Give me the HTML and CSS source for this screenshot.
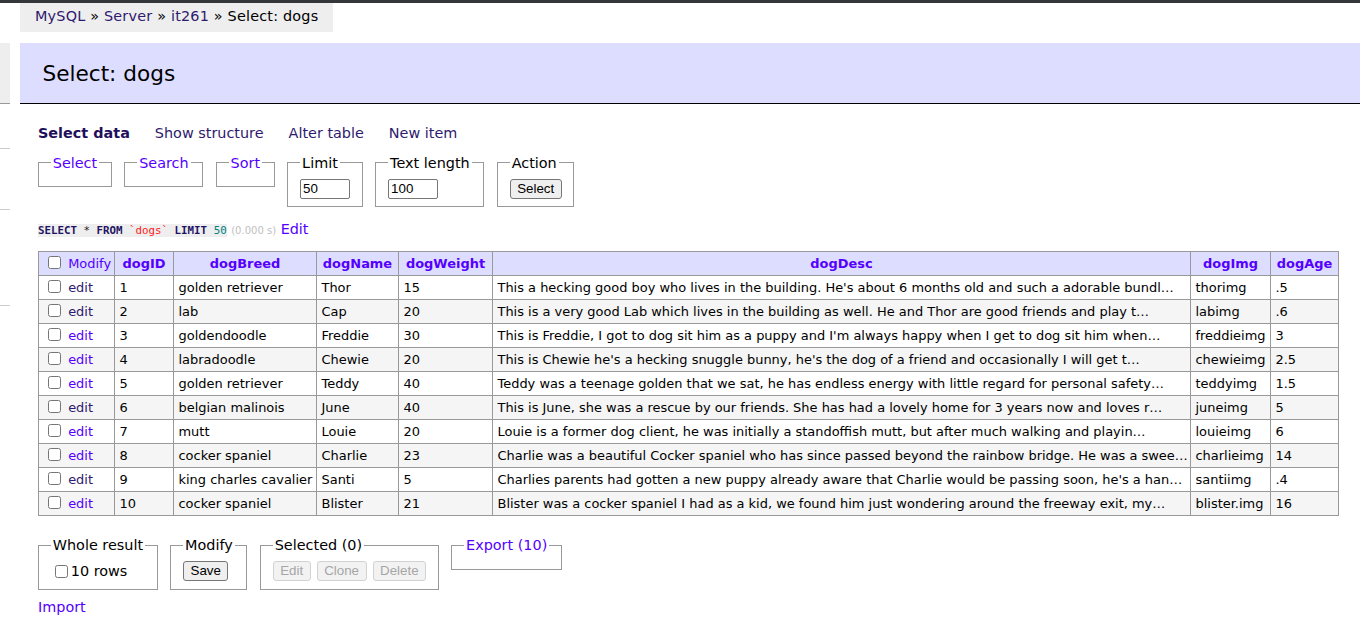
FILE: index.html
```html
<!DOCTYPE html>
<html lang="en">
<head>
<meta charset="utf-8">
<title>Select: dogs - Server - Adminer</title>
<link rel="stylesheet" href="styles.css">
</head>
<body>
<div class="chrome-bar"></div>
<div class="page">
  <aside class="menu">
    <div class="menu-head"></div>
    <div class="menu-block b1"></div>
    <div class="menu-block b2"></div>
    <div class="menu-block b3"></div>
  </aside>
  <main class="main">
    <div class="breadcrumb"><a class="visited" href="#">MySQL</a> » <a class="visited" href="#">Server</a> » <a class="visited" href="#">it261</a> » Select: dogs</div>
    <h2 class="title">Select: dogs</h2>
    <div class="content">
      <p class="links"><a class="visited active" href="#">Select data</a><a class="visited" href="#">Show structure</a><a class="visited" href="#">Alter table</a><a class="visited" href="#">New item</a></p>
      <form class="select-form">
        <fieldset class="fs"><legend><a href="#">Select</a></legend></fieldset>
        <fieldset class="fs"><legend><a href="#">Search</a></legend></fieldset>
        <fieldset class="fs"><legend><a href="#">Sort</a></legend></fieldset>
        <fieldset class="fs"><legend>Limit</legend><input class="num-input" type="text" value="50"></fieldset>
        <fieldset class="fs"><legend>Text length</legend><input class="num-input" type="text" value="100"></fieldset>
        <fieldset class="fs"><legend>Action</legend><button class="btn" type="button">Select</button></fieldset>
      </form>
      <p class="sql"><code class="jush"><span class="kw">SELECT</span> * <span class="kw">FROM</span> <span class="bac">`dogs`</span> <span class="kw">LIMIT</span> <span class="num">50</span></code> <span class="time">(0.000 s)</span> <a href="#">Edit</a></p>

      <table class="data">
        <colgroup>
          <col class="w-mod"><col class="w-id"><col class="w-breed"><col class="w-name"><col class="w-weight"><col class="w-desc"><col class="w-img"><col class="w-age">
        </colgroup>
        <thead>
          <tr>
            <td class="head-mod"><input type="checkbox" class="chk"> <a href="#">Modify</a></td>
            <th><a href="#">dogID</a></th>
            <th><a href="#">dogBreed</a></th>
            <th><a href="#">dogName</a></th>
            <th><a href="#">dogWeight</a></th>
            <th><a href="#">dogDesc</a></th>
            <th><a href="#">dogImg</a></th>
            <th><a href="#">dogAge</a></th>
          </tr>
        </thead>
        <tbody>
          <tr><td><input type="checkbox" class="chk"> <a class="visited" href="#">edit</a></td><td>1</td><td>golden retriever</td><td>Thor</td><td>15</td><td class="desc">This a hecking good boy who lives in the building. He's about 6 months old and such a adorable bundl…</td><td>thorimg</td><td>.5</td></tr>
          <tr class="odd"><td><input type="checkbox" class="chk"> <a class="visited" href="#">edit</a></td><td>2</td><td>lab</td><td>Cap</td><td>20</td><td class="desc">This is a very good Lab which lives in the building as well. He and Thor are good friends and play t…</td><td>labimg</td><td>.6</td></tr>
          <tr><td><input type="checkbox" class="chk"> <a href="#">edit</a></td><td>3</td><td>goldendoodle</td><td>Freddie</td><td>30</td><td class="desc">This is Freddie, I got to dog sit him as a puppy and I'm always happy when I get to dog sit him when…</td><td>freddieimg</td><td>3</td></tr>
          <tr class="odd"><td><input type="checkbox" class="chk"> <a href="#">edit</a></td><td>4</td><td>labradoodle</td><td>Chewie</td><td>20</td><td class="desc">This is Chewie he's a hecking snuggle bunny, he's the dog of a friend and occasionally I will get t…</td><td>chewieimg</td><td>2.5</td></tr>
          <tr><td><input type="checkbox" class="chk"> <a href="#">edit</a></td><td>5</td><td>golden retriever</td><td>Teddy</td><td>40</td><td class="desc">Teddy was a teenage golden that we sat, he has endless energy with little regard for personal safety…</td><td>teddyimg</td><td>1.5</td></tr>
          <tr class="odd"><td><input type="checkbox" class="chk"> <a class="visited" href="#">edit</a></td><td>6</td><td>belgian malinois</td><td>June</td><td>40</td><td class="desc">This is June, she was a rescue by our friends. She has had a lovely home for 3 years now and loves r…</td><td>juneimg</td><td>5</td></tr>
          <tr><td><input type="checkbox" class="chk"> <a href="#">edit</a></td><td>7</td><td>mutt</td><td>Louie</td><td>20</td><td class="desc">Louie is a former dog client, he was initially a standoffish mutt, but after much walking and playin…</td><td>louieimg</td><td>6</td></tr>
          <tr class="odd"><td><input type="checkbox" class="chk"> <a href="#">edit</a></td><td>8</td><td>cocker spaniel</td><td>Charlie</td><td>23</td><td class="desc">Charlie was a beautiful Cocker spaniel who has since passed beyond the rainbow bridge. He was a swee…</td><td>charlieimg</td><td>14</td></tr>
          <tr><td><input type="checkbox" class="chk"> <a class="visited" href="#">edit</a></td><td>9</td><td>king charles cavalier</td><td>Santi</td><td>5</td><td class="desc">Charlies parents had gotten a new puppy already aware that Charlie would be passing soon, he's a han…</td><td>santiimg</td><td>.4</td></tr>
          <tr class="odd"><td><input type="checkbox" class="chk"> <a href="#">edit</a></td><td>10</td><td>cocker spaniel</td><td>Blister</td><td>21</td><td class="desc">Blister was a cocker spaniel I had as a kid, we found him just wondering around the freeway exit, my…</td><td>blister.img</td><td>16</td></tr>
        </tbody>
      </table>

      <div class="footer">
        <fieldset class="fs"><legend>Whole result</legend><label class="all-label"><input type="checkbox" class="chk">10 rows</label></fieldset>
        <fieldset class="fs"><legend>Modify</legend><button class="btn" type="button">Save</button></fieldset>
        <fieldset class="fs"><legend>Selected (0)</legend><div class="btn-row"><button class="btn" type="button" disabled>Edit</button><button class="btn" type="button" disabled>Clone</button><button class="btn" type="button" disabled>Delete</button></div></fieldset>
        <fieldset class="fs fs-export"><legend><a href="#">Export (10)</a></legend></fieldset>
      </div>
      <p class="import"><a href="#">Import</a></p>
    </div>
  </main>
</div>
</body>
</html>
```
FILE: styles.css
```css
html, body {
  margin: 0;
  padding: 0;
}
body {
  font: 14.4px/1.25 "DejaVu Sans", Verdana, sans-serif;
  color: #000;
  background: #fff;
  overflow: hidden;
}
a {
  color: #5500ff;
  text-decoration: none;
}
a.visited {
  color: #2e1a6e;
}

.chrome-bar {
  height: 3px;
  background: #35363a;
}

.page {
  display: grid;
  grid-template-columns: 10px 1fr;
  column-gap: 10px;
}

/* cut-off left menu */
.menu-head {
  box-sizing: border-box;
  margin-top: 40px;
  height: 61px;
  background: #eee;
  border-bottom: 1px solid #999;
}
.menu-block {
  box-sizing: border-box;
  border-bottom: 1px solid #ccc;
}
.b1 { height: 45px; }
.b2 { height: 61px; }
.b3 { height: 96px; }

.main {
  min-width: 0;
}

.breadcrumb {
  box-sizing: border-box;
  width: fit-content;
  height: 29px;
  line-height: 27px;
  padding: 0 15px;
  background: #eee;
  white-space: nowrap;
  letter-spacing: 0.2px;
}

.title {
  margin: 11px 0 20px;
  padding: 17px 22.5px 16px;
  font-size: 21.6px;
  line-height: 27px;
  font-weight: normal;
  color: #000;
  background: #ddf;
  border-bottom: 1px solid #000;
}

.content {
  padding-left: 18px;
}

.links {
  margin: 20px 0 0;
  line-height: 18px;
}
.links a {
  margin-right: 25px;
  white-space: nowrap;
}
.links a.active {
  font-weight: bold;
  color: #1f0f5c;
}

.select-form,
.footer {
  display: flex;
  align-items: flex-start;
  column-gap: 12.5px;
}
.select-form {
  margin-top: 11.5px;
}

.fs {
  margin: 0;
  padding: 7.2px 11.75px;
  border: 1px solid #999;
  min-width: 0;
}
.fs legend {
  padding: 0 2px;
  line-height: 18px;
}

.num-input {
  box-sizing: border-box;
  display: block;
  width: 50px;
  height: 20px;
  margin: 0;
  padding: 1px 2px;
  font: 13.33px "Liberation Sans", Arial, sans-serif;
  color: #000;
  border: 1px solid #767676;
  border-radius: 2px;
  background: #fff;
}

.btn {
  box-sizing: border-box;
  height: 20px;
  margin: 0;
  padding: 0 6.5px;
  font: 13.33px/16px "Liberation Sans", Arial, sans-serif;
  color: #000;
  background: #efefef;
  border: 1px solid #767676;
  border-radius: 3px;
}
.btn:disabled {
  color: #a6a6a6;
  background: #f2f2f2;
  border-color: #d2d2d2;
}
.btn-row {
  display: flex;
  gap: 6px;
}

.sql {
  margin: 13px 0 0;
  line-height: 18px;
}
.jush {
  font-family: "DejaVu Sans Mono", monospace;
  font-size: 10.8px;
  background: #eee;
  color: #222;
}
.jush .kw {
  color: #1f1464;
  font-weight: bold;
}
.jush .bac {
  color: #ff1a1a;
}
.jush .num {
  color: #007f7f;
}
.time {
  color: silver;
  font-size: 10px;
}

.data {
  margin-top: 11.4px;
  border-collapse: collapse;
  table-layout: fixed;
  width: 1300px;
  font-size: 12.96px;
  line-height: 16px;
}
.w-mod { width: 76px; }
.w-id { width: 59px; }
.w-breed { width: 143px; }
.w-name { width: 82px; }
.w-weight { width: 94px; }
.w-desc { width: 698px; }
.w-img { width: 80px; }
.w-age { width: 68px; }

.data td,
.data th {
  border: 1px solid #999;
  padding: 0 4.5px;
  height: 23px;
  white-space: nowrap;
  overflow: hidden;
  vertical-align: middle;
}
.data thead th {
  background: #ddf;
  text-align: center;
  font-weight: bold;
  padding: 0 4px;
}
.data thead td {
  background: #ddf;
}
.data tr.odd td {
  background: #f5f5f5;
}
.chk {
  width: 13px;
  height: 13px;
  margin: 3px 3px 3px 5px;
  vertical-align: middle;
}
.data td .chk {
  position: relative;
  top: -1px;
  margin-left: 4.5px;
}
.data td a {
  vertical-align: middle;
}

.footer {
  margin-top: 20px;
}
.all-label {
  display: block;
  line-height: 20px;
  white-space: nowrap;
}
.all-label .chk {
  margin: 0 3px 0 4px;
  position: relative;
  top: -1px;
}

.import {
  margin: 8px 0 0;
  line-height: 18px;
}
```
